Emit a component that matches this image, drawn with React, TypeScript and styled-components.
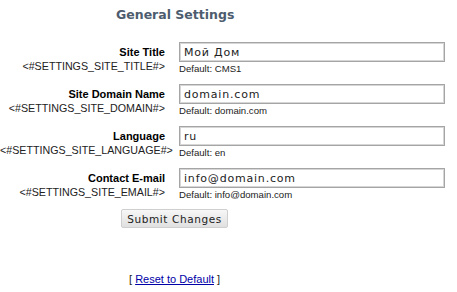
import React from 'react'
import styled, { createGlobalStyle } from 'styled-components'

const Global = createGlobalStyle`
  html, body {
    margin: 0;
    padding: 0;
    background: #ffffff;
    font-family: "Liberation Sans", Arial, sans-serif;
  }
`

const Page = styled.div`
  width: 457px;
  height: 292px;
  box-sizing: border-box;
  padding-top: 7px;
`

const Heading = styled.h1`
  margin: 0 0 0 116px;
  font-family: "DejaVu Sans", Verdana, sans-serif;
  font-size: 12.5px;
  font-weight: bold;
  color: #4d5c6e;
  line-height: 16px;
`

const Form = styled.div`
  display: grid;
  grid-template-columns: 165px 267px;
  column-gap: 14px;
  row-gap: 9px;
  margin-top: 19px;
`

const LabelCell = styled.div`
  text-align: right;
  padding-top: 4px;
`

const Label = styled.div`
  font-size: 11px;
  font-weight: bold;
  color: #000;
  line-height: 13px;
`

const Code = styled.div`
  font-size: 10.7px;
  color: #222;
  line-height: 14px;
  white-space: nowrap;
`

const FieldCell = styled.div`
  display: flex;
  flex-direction: column;
`

const Input = styled.input`
  box-sizing: border-box;
  width: 266px;
  height: 20px;
  border: 1px solid #a5a5a5;
  box-shadow: inset 0 0 0 1px #d6d6d6;
  padding: 0 4px;
  margin: 0;
  font-family: "DejaVu Sans", Verdana, sans-serif;
  font-size: 11px;
  letter-spacing: 0.8px;
  color: #222;
  outline: none;
`

const Hint = styled.div`
  font-size: 9.6px;
  color: #222;
  line-height: 12px;
  margin-top: 1px;
`

const Actions = styled.div`
  margin: 8px 0 0 121px;
`

const Button = styled.button`
  display: block;
  height: 19px;
  width: 107px;
  padding: 0;
  border: 1px solid #cfcfcf;
  border-radius: 2px;
  background: linear-gradient(#f7f7f7, #e0e0e0);
  font-family: "DejaVu Sans", Verdana, sans-serif;
  font-size: 10.5px;
  letter-spacing: 0.6px;
  color: #222;
`

const Footer = styled.div`
  margin: 44px 0 0 129px;
  font-size: 11px;
  line-height: 14px;
  color: #222;
`

const Link = styled.a`
  color: #0000a8;
  text-decoration: underline;
`

const fields = [
  { label: 'Site Title', code: '<#SETTINGS_SITE_TITLE#>', value: 'Мой Дом', def: 'CMS1' },
  { label: 'Site Domain Name', code: '<#SETTINGS_SITE_DOMAIN#>', value: 'domain.com', def: 'domain.com' },
  { label: 'Language', code: '<#SETTINGS_SITE_LANGUAGE#>', value: 'ru', def: 'en' },
  { label: 'Contact E-mail', code: '<#SETTINGS_SITE_EMAIL#>', value: 'info@domain.com', def: 'info@domain.com' },
]

const App = () => {
  return (
    <Page>
      <Global />
      <Heading>General Settings</Heading>
      <Form>
        {fields.map((f) => (
          <React.Fragment key={f.label}>
            <LabelCell>
              <Label>{f.label}</Label>
              <Code>{f.code}</Code>
            </LabelCell>
            <FieldCell>
              <Input defaultValue={f.value} />
              <Hint>{`Default: ${f.def}`}</Hint>
            </FieldCell>
          </React.Fragment>
        ))}
      </Form>
      <Actions>
        <Button>Submit Changes</Button>
      </Actions>
      <Footer>
        [ <Link href="#">Reset to Default</Link> ]
      </Footer>
    </Page>
  )
}

export default App
